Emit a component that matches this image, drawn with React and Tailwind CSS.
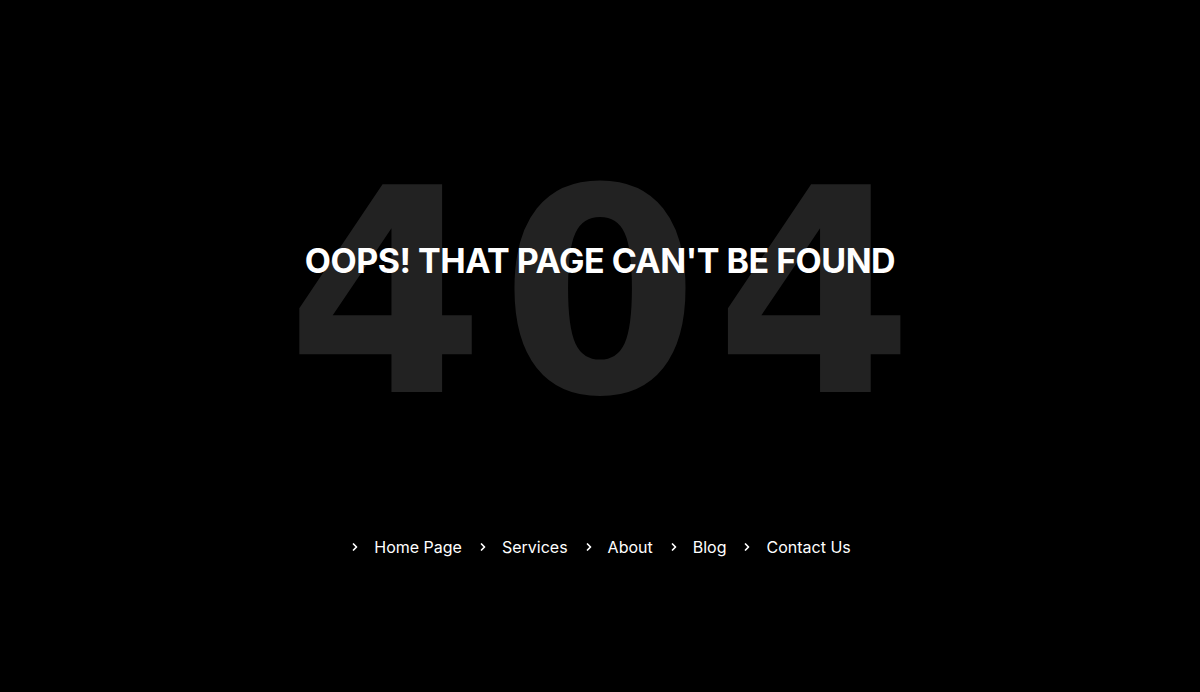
import React from "react";
import { ChevronRight } from "lucide-react";

const links = ["Home Page", "Services", "About", "Blog", "Contact Us"];

export default function App() {
  return (
    <div className="min-h-[692px] w-full bg-black flex flex-col items-center font-['Inter',sans-serif]">
      <div className="relative mt-[151px] flex items-center justify-center">
        <span className="pl-[16px] font-['DejaVu_Sans',sans-serif] text-[285px] leading-none font-bold text-[#222222] tracking-[16px] select-none">404</span>
        <h1 className="absolute inset-x-0 top-[84px] text-center text-white text-[34px] font-bold tracking-[-0.5px] whitespace-nowrap">
          OOPS! THAT PAGE CAN'T BE FOUND
        </h1>
      </div>
      <ul className="mt-[99px] flex items-center gap-[15px] text-white text-[16px]">
        {links.map((l) => (
          <li key={l} className="flex items-center gap-[13px]">
            <ChevronRight size={12} strokeWidth={3.5} />
            <a href="#" className="hover:underline">{l}</a>
          </li>
        ))}
      </ul>
    </div>
  );
}
